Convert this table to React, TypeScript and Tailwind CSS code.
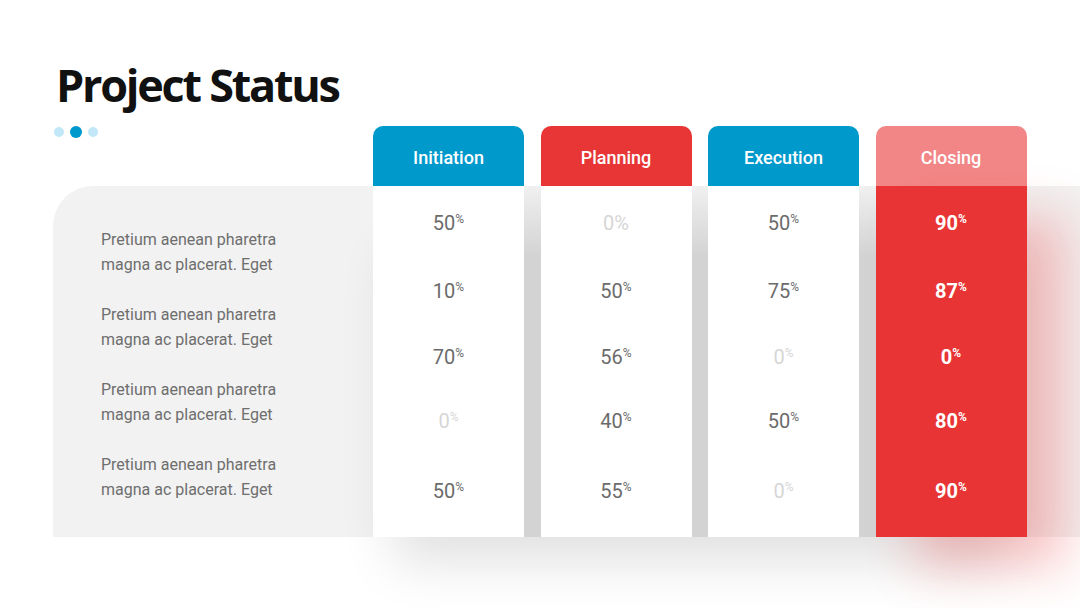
import React from "react";

type Cell = { v: string; dim?: boolean; flat?: boolean };

const COLS: { title: string; head: string; body: string; shadow: string; strong?: boolean; cells: Cell[] }[] = [
  {
    title: "Initiation",
    head: "bg-[#0099cc]",
    body: "bg-white",
    shadow: "",
    cells: [{ v: "50" }, { v: "10" }, { v: "70" }, { v: "0", dim: true }, { v: "50" }],
  },
  {
    title: "Planning",
    head: "bg-[#e83535]",
    body: "bg-white",
    shadow: "",
    cells: [{ v: "0", dim: true, flat: true }, { v: "50" }, { v: "56" }, { v: "40" }, { v: "55" }],
  },
  {
    title: "Execution",
    head: "bg-[#0099cc]",
    body: "bg-white",
    shadow: "",
    cells: [{ v: "50" }, { v: "75" }, { v: "0", dim: true }, { v: "50" }, { v: "0", dim: true }],
  },
  {
    title: "Closing",
    head: "bg-[#f28686]",
    body: "bg-[#e83434]",
    shadow: "shadow-[40px_30px_50px_rgba(232,52,52,0.28)]",
    strong: true,
    cells: [{ v: "90" }, { v: "87" }, { v: "0" }, { v: "80" }, { v: "90" }],
  },
];

// offsets so the figures sit where the slide has them
const GAPS = ["mt-[25px]", "mt-[44px]", "mt-[42px]", "mt-[40px]", "mt-[46px]"];

const Value: React.FC<{ cell: Cell; strong?: boolean }> = ({ cell, strong }) => {
  const color = strong ? "text-white font-bold" : cell.dim ? "text-[#d6d6d6]" : "text-[#6b6b6b]";
  if (cell.flat) {
    return (
      <div className={`h-6 leading-6 text-[20px] ${color}`}>
        {cell.v}%
      </div>
    );
  }
  return (
    <div className={`h-6 leading-6 text-[20px] ${color}`}>
      {cell.v}
      <span className="relative -top-[7px] text-[12px]">%</span>
    </div>
  );
};

export default function App() {
  return (
    <div
      className="relative h-[608px] w-[1080px] overflow-hidden bg-white"
      style={{ fontFamily: "Roboto, 'Liberation Sans', sans-serif" }}
    >
      <h1
        className="pl-[56px] pt-[57px] text-[45px] font-bold leading-[56px] tracking-[-0.05em] text-[#111]"
        style={{ fontFamily: "'Open Sans', 'Liberation Sans', sans-serif" }}
      >
        Project Status
      </h1>

      <div className="mt-[13px] flex items-center gap-[6px] pl-[54px]">
        <span className="h-[10px] w-[10px] rounded-full bg-[#c2e8f8]" />
        <span className="h-[12px] w-[12px] rounded-full bg-[#0099cc]" />
        <span className="h-[10px] w-[10px] rounded-full bg-[#c2e8f8]" />
      </div>

      <div className="ml-[53px] mt-[48px] flex h-[351px] rounded-tl-[40px] bg-[#f2f2f2]">
        <div className="w-[320px] pl-[48px] pt-[41px] text-[16px] leading-[25px] text-[#6e6e6e]">
          {[0, 1, 2, 3].map((i) => (
            <p key={i} className="mb-[25px]">
              Pretium aenean pharetra
              <br />
              magna ac placerat. Eget
            </p>
          ))}
        </div>

        <div className="-mt-[60px] flex flex-col">
          <div className="flex gap-[16.5px]">
            {COLS.map((c) => (
              <div
                key={c.title}
                className={`flex h-[60px] w-[151px] items-center justify-center rounded-t-[10px] pt-[2px] text-[18px] font-medium text-white ${c.head}`}
              >
                {c.title}
              </div>
            ))}
          </div>
          <div className="flex h-[351px] gap-[16.5px] bg-[linear-gradient(to_bottom,#f0f0f0,#d3d3d3_70px,#d3d3d3)] shadow-[0_45px_50px_-20px_rgba(0,0,0,0.12)]">
            {COLS.map((c) => (
              <div key={c.title} className={`flex w-[151px] flex-col items-center ${c.body} ${c.shadow}`}>
                {c.cells.map((cell, i) => (
                  <div key={i} className={GAPS[i]}>
                    <Value cell={cell} strong={c.strong} />
                  </div>
                ))}
              </div>
            ))}
          </div>
        </div>
      </div>
    </div>
  );
}
